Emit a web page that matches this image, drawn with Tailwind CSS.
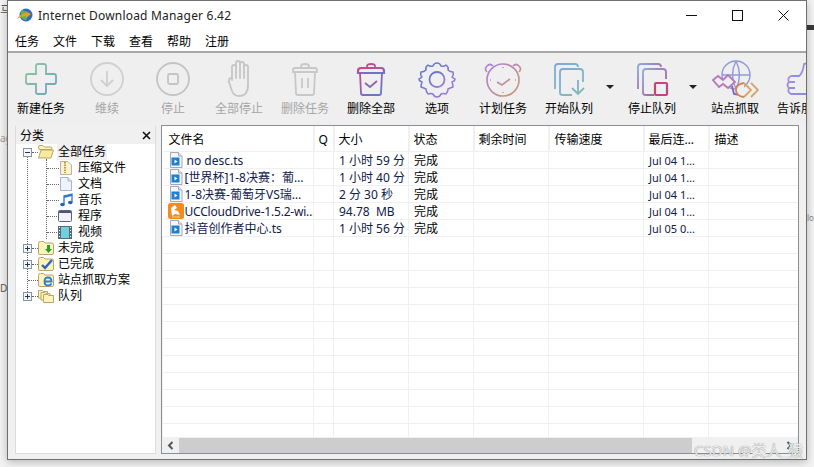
<!DOCTYPE html>
<html lang="zh">
<head>
  <meta charset="UTF-8">
  <title>Internet Download Manager 6.42</title>
  <script src="https://cdn.jsdelivr.net/npm/@tailwindcss/browser@4"></script>
</head>
<body class="w-[814px] h-[467px] overflow-hidden relative bg-[#f3f3f3] text-[12px] leading-[16px] text-black font-['Noto_Sans','Noto_Sans_CJK_SC',sans-serif]">

  <!-- shared gradients and file icon -->
  <svg width="0" height="0" class="absolute">
    <defs>
      <linearGradient id="gPlus" x1="0" y1="0" x2="1" y2="1"><stop offset="0" stop-color="#8fc9a0"/><stop offset="1" stop-color="#6f9fc0"/></linearGradient>
      <linearGradient id="gTrash" x1="0" y1="0" x2="0.6" y2="1"><stop offset="0" stop-color="#d9417f"/><stop offset="1" stop-color="#6a76c8"/></linearGradient>
      <linearGradient id="gGear" x1="0" y1="0" x2="1" y2="1"><stop offset="0" stop-color="#5a78c4"/><stop offset="1" stop-color="#a67ae0"/></linearGradient>
      <linearGradient id="gClock" x1="0" y1="0" x2="1" y2="1"><stop offset="0" stop-color="#a982e0"/><stop offset="1" stop-color="#d09a70"/></linearGradient>
      <linearGradient id="gStart" x1="0" y1="0" x2="1" y2="1"><stop offset="0" stop-color="#7ba8e4"/><stop offset="1" stop-color="#80c0a8"/></linearGradient>
      <linearGradient id="gStop" x1="0" y1="0" x2="1" y2="1"><stop offset="0" stop-color="#86aee4"/><stop offset="1" stop-color="#c2457f"/></linearGradient>
      <linearGradient id="gThumb" x1="0" y1="0" x2="1" y2="1"><stop offset="0" stop-color="#b08ae4"/><stop offset="1" stop-color="#8090e0"/></linearGradient>
      <symbol id="fileTs" viewBox="0 0 14 16">
        <path d="M1.5.5h8l3.5 3.5v11.500h-11.500z" fill="#f4f6fa" stroke="#a0aab8"/>
        <path d="M9.500.5v3.500h3.500" fill="#dfe5ee" stroke="#a0aab8"/>
        <rect x="2.500" y="5.500" width="8" height="8" fill="#1f80d0"/>
        <path d="M5.500 7.500l3 2-3 2z" fill="#fff"/>
      </symbol>
      <symbol id="plusBox" viewBox="0 0 9 9">
        <rect x=".5" y=".5" width="8" height="8" fill="#f6f6f6" stroke="#8a94a0"/>
        <path d="M2 4.500h5M4.500 2v5" stroke="#1c3a66"/>
      </symbol>
      <symbol id="folderY" viewBox="0 0 16 14">
        <path d="M.5 2.500q0-2 2-2h3l1.500 1.500h7q1.500 0 1.500 1.500v8.500q0 1.500-1.500 1.500h-12q-1.500 0-1.500-1.500z" fill="#fdf3bd" stroke="#b9a566"/>
      </symbol>
    </defs>
  </svg>

  <!-- bits of the windows behind -->
  <div class="absolute left-0 top-[3px] w-[7px] overflow-hidden text-[#555] whitespace-nowrap">马上</div>
  <div class="absolute left-0 top-[130px] w-[7px] overflow-hidden text-[10px] text-[#999]">age</div>
  <div class="absolute left-0 top-[280px] w-[7px] overflow-hidden text-[10px] text-[#555]">DI</div>
  <div class="absolute left-[807px] top-0 w-[7px] h-[467px] overflow-hidden">
    <div class="mt-[25px] h-[5px] bg-[#3a3a3a]"></div>
    <div class="mt-[180px] text-[8px] text-[#888]">lox</div>
  </div>

  <!-- window -->
  <div class="ml-[7px] w-[800px] h-[460px] border border-[#6f6f6f] bg-[#f0f0f0] flex flex-col shadow-[0_2px_8px_rgba(0,0,0,0.25)] relative overflow-hidden">

    <!-- title bar -->
    <div class="h-[29px] bg-white flex items-center shrink-0">
      <svg class="ml-[8px]" width="17" height="17" viewBox="0 0 17 17">
        <circle cx="10" cy="8" r="6.500" fill="#2f6fc0"/>
        <path d="M6 3q4 1 5 4t-1 6q-4 0-5-4t1-6z" fill="#6cb245"/>
        <path d="M1 12q3-5 9-6l-1-2 6 3-5 4 0-2q-5 0-9 3z" fill="#e6a020"/>
      </svg>
      <span class="ml-[5px] text-[#222] tracking-[0.2px]">Internet Download Manager 6.42</span>
      <div class="ml-auto flex items-center">
        <svg class="mr-[35px]" width="11" height="11" viewBox="0 0 11 11"><path d="M0 5.500h11" stroke="#111"/></svg>
        <svg class="mr-[35px]" width="11" height="11" viewBox="0 0 11 11"><rect x=".5" y=".5" width="10" height="10" fill="none" stroke="#111"/></svg>
        <svg class="mr-[17px]" width="11" height="11" viewBox="0 0 11 11"><path d="M.5.5l10 10M10.500.5l-10 10" stroke="#111"/></svg>
      </div>
    </div>

    <!-- menu bar -->
    <div class="h-[21px] pt-[3px] bg-white flex items-center gap-[14px] pl-[7px] shrink-0">
      <span>任务</span><span>文件</span><span>下载</span><span>查看</span><span>帮助</span><span>注册</span>
    </div>

    <!-- toolbar -->
    <div class="h-[74px] border-t-2 border-t-[#a8a8a8] bg-[#efefef] flex shrink-0 overflow-hidden">

      <div class="w-[66px] shrink-0 flex flex-col items-center pt-[6px]">
        <svg width="40" height="40" viewBox="0 0 40 40" fill="none" stroke="url(#gPlus)" stroke-width="1.800"><path d="M15 7q0-2 2-2h6q2 0 2 2v8h8q2 0 2 2v6q0 2-2 2h-8v8q0 2-2 2h-6q-2 0-2-2v-8H7q-2 0-2-2v-6q0-2 2-2h8z"/></svg>
        <span class="mt-[2px] whitespace-nowrap">新建任务</span>
      </div>

      <div class="w-[66px] shrink-0 flex flex-col items-center pt-[6px] text-[#a6a6a6]">
        <svg width="40" height="40" viewBox="0 0 40 40" fill="none" stroke="#cfcfcf" stroke-width="1.800"><circle cx="20" cy="20" r="16"/><path d="M20 12v15M14 21l6 6 6-6"/></svg>
        <span class="mt-[2px] whitespace-nowrap">维续</span>
      </div>

      <div class="w-[66px] shrink-0 flex flex-col items-center pt-[6px] text-[#a6a6a6]">
        <svg width="40" height="40" viewBox="0 0 40 40" fill="none" stroke="#c4c4c4" stroke-width="1.800"><circle cx="20" cy="20" r="16"/><rect x="15" y="15" width="10" height="10" rx="1.500"/></svg>
        <span class="mt-[2px] whitespace-nowrap">停止</span>
      </div>

      <div class="w-[66px] shrink-0 flex flex-col items-center pt-[6px] text-[#a6a6a6]">
        <svg width="40" height="40" viewBox="0 0 40 40" fill="none" stroke="#c6c6c6" stroke-width="1.800" stroke-linecap="round"><path d="M13 21V8q0-2 2-2t2 2v11M17 19V4q0-2 2-2t2 2v15M21 19V5q0-2 2-2t2 2v14M25 19V8q0-2 2-2t2 2v18q0 11-9 11-5 0-7-5l-3-9"/><path d="M10 23v-2q0-2 3-2"/></svg>
        <span class="mt-[2px] whitespace-nowrap">全部停止</span>
      </div>

      <div class="w-[66px] shrink-0 flex flex-col items-center pt-[6px] text-[#a6a6a6]">
        <svg width="40" height="40" viewBox="0 0 40 40" fill="none" stroke="#c8c8c8" stroke-width="1.800"><path d="M8 11q0-2 2-2h20q2 0 2 2v2H8z"/><path d="M16 9V7q0-2 4-2t4 2v2M10 13l1 21q0 2 2 2h14q2 0 2-2l1-21M17 19v10M23 19v10"/></svg>
        <span class="mt-[2px] whitespace-nowrap">删除任务</span>
      </div>

      <div class="w-[66px] shrink-0 flex flex-col items-center pt-[6px]">
        <svg width="40" height="40" viewBox="0 0 40 40" fill="none" stroke="url(#gTrash)" stroke-width="1.800"><path d="M7 12q0-3 3-3h20q3 0 3 3v2H7z" stroke-width="2.200"/><path d="M16 9V7q0-2 4-2t4 2v2M9 14l1 20q0 2 2 2h16q2 0 2-2l1-20"/><path d="M14 24l5 4 7-6"/></svg>
        <span class="mt-[2px] whitespace-nowrap">删除全部</span>
      </div>

      <div class="w-[66px] shrink-0 flex flex-col items-center pt-[6px]">
        <svg width="40" height="40" viewBox="0 0 40 40" fill="none" stroke="url(#gGear)" stroke-width="1.500"><path d="M20 4q3 0 4 3 3 1 5-1 3 2 2 5 2 2 5 2 1 3-1 5 1 1 3 2 0 2-3 3 1 3 1 5-3 1-5 2 0 3-2 5-3-1-5 0-1 3-4 3t-4-3q-2-1-5 0-2-2-2-5-2-1-5-2 0-2 1-5-3-1-3-3 2-1 3-2-2-2-1-5 3 0 5-2-1-3 2-5 2 2 5 1 1-3 4-3z" stroke-linejoin="round"/><circle cx="20" cy="20.500" r="7.500" stroke-width="1.800"/></svg>
        <span class="mt-[2px] whitespace-nowrap">选项</span>
      </div>

      <div class="w-[66px] shrink-0 flex flex-col items-center pt-[6px]">
        <svg width="40" height="40" viewBox="0 0 40 40" fill="none" stroke="url(#gClock)" stroke-width="1.700"><circle cx="20" cy="21" r="16"/><path d="M4 13q-3-3 0-6t6 0M36 13q3-3 0-6t-6 0"/><path d="M14 23l5 3 8-6"/><path d="M20 8v1M20 33v1M7 21h1M32 21h1" stroke-width="1.500"/></svg>
        <span class="mt-[2px] whitespace-nowrap">计划任务</span>
      </div>

      <div class="w-[83px] shrink-0 flex items-start">
        <div class="w-[66px] flex flex-col items-center pt-[6px]">
          <svg width="40" height="40" viewBox="0 0 40 40" fill="none" stroke="url(#gStart)" stroke-width="1.800"><path d="M6 30V8q0-3 3-3h17q3 0 3 3"/><path d="M11 34V13q0-3 3-3h17q3 0 3 3v10M23 36H14q-3 0-3-2"/><path d="M29 21v14M23 29l6 6 6-6"/></svg>
          <span class="mt-[2px] whitespace-nowrap">开始队列</span>
        </div>
        <div class="mt-[32px] ml-[4px] w-0 h-0 border-x-[4px] border-x-transparent border-t-[4px] border-t-[#222]"></div>
      </div>

      <div class="w-[83px] shrink-0 flex items-start">
        <div class="w-[66px] flex flex-col items-center pt-[6px]">
          <svg width="40" height="40" viewBox="0 0 40 40" fill="none" stroke="url(#gStop)" stroke-width="1.800"><path d="M6 30V8q0-3 3-3h17q3 0 3 3"/><path d="M11 34V13q0-3 3-3h17q3 0 3 3v7M22 36h-8q-3 0-3-2"/><rect x="23" y="24" width="12" height="12" rx="1" stroke-width="2.200" stroke="#c2457f"/></svg>
          <span class="mt-[2px] whitespace-nowrap">停止队列</span>
        </div>
        <div class="mt-[32px] ml-[4px] w-0 h-0 border-x-[4px] border-x-transparent border-t-[4px] border-t-[#222]"></div>
      </div>

      <div class="w-[66px] shrink-0 flex flex-col items-center pt-[6px]">
        <svg width="48" height="40" viewBox="0 0 48 40" fill="none" stroke-width="1.800" class="-mx-[4px]">
          <circle cx="25" cy="16" r="14" stroke="#8e9ad8" stroke-width="1.400"/>
          <path d="M11 16h28M25 2q-7 14 0 28M25 2q7 14 0 28" stroke="#8e9ad8" stroke-width="1.400"/>
          <path d="M2 21l5-4 5 4 5-5 7 7-7 6-5-4-4 3z" fill="#efefef" stroke="#b878b8"/>
          <path d="M21 27l2 8 6 1" stroke="#8060c0"/>
          <path d="M33 24q-8 1-8 7t8 7" fill="#efefef" stroke="#c8885a"/>
          <path d="M33 24l7 7-7 7M40 24l7 7-7 7" stroke="#d8a468"/>
        </svg>
        <span class="mt-[2px] whitespace-nowrap">站点抓取</span>
      </div>

      <div class="w-[66px] shrink-0 flex flex-col items-center pt-[6px]">
        <svg width="40" height="40" viewBox="0 0 40 40" fill="none" stroke="url(#gThumb)" stroke-width="1.800"><path d="M10 17h8q4-3 5-12 5-2 7 3v8"/><path d="M10 17q-4 2-2 6-3 3 0 6-2 4 2 6h24"/><path d="M8 23h6M8 29h6"/></svg>
        <span class="mt-[2px] whitespace-nowrap">告诉朋友</span>
      </div>
    </div>

    <!-- main -->
    <div class="flex-1 flex pl-[7px] pr-[7px] pt-0 pb-[5px] min-h-0">

      <!-- category panel -->
      <div class="w-[141px] border-x border-b border-[#dcdcdc] mt-[1px] flex flex-col">
        <div class="h-[18px] pt-[1px] flex items-center justify-between pl-[4px] pr-[4px] bg-[#f0f0f0] shrink-0">
          <span>分类</span>
          <svg width="9" height="9" viewBox="0 0 9 9"><path d="M1 1l7 7M8 1l-7 7" stroke="#111" stroke-width="1.600"/></svg>
        </div>
        <div class="flex-1 bg-white relative">
          <!-- tree connectors -->
          <div class="absolute left-[11px] top-[12px] h-[142px] border-l border-dotted border-[#666]"></div>
          <div class="absolute left-[30px] top-[15px] h-[80px] border-l border-dotted border-[#666]"></div>

          <div class="relative h-[16px] flex items-center pl-[7px]">
            <svg width="9" height="9" viewBox="0 0 9 9"><rect x=".5" y=".5" width="8" height="8" fill="#f6f6f6" stroke="#8a94a0"/><path d="M2 4.500h5" stroke="#1c3a66"/></svg>
            <span class="w-[6px] border-t border-dotted border-[#666]"></span>
            <svg width="16" height="14" viewBox="0 0 16 14"><path d="M.5 2q0-1.500 1.500-1.500h3l1.500 1.500h6q1.500 0 1.500 1.500v1h-13z" fill="#fdf3bd" stroke="#b9a566"/><path d="M.5 13l2.500-8h12.500l-2.500 8z" fill="#fbe9a0" stroke="#b9a566"/></svg>
            <span class="ml-[3px] px-[1px] bg-[#f0f0f0]">全部任务</span>
          </div>

          <div class="h-[16px] flex items-center pl-[31px]">
            <span class="w-[12px] border-t border-dotted border-[#666]"></span>
            <svg class="ml-[1px]" width="12" height="14" viewBox="0 0 12 14"><path d="M.5.5h7.500l3.500 3.500v9.500h-11z" fill="#fbf1d8" stroke="#b8b2a0"/><path d="M5 1v11" stroke="#d0962a" stroke-width="2" stroke-dasharray="1.500 1"/></svg>
            <span class="ml-[6px]">压缩文件</span>
          </div>
          <div class="h-[16px] flex items-center pl-[31px]">
            <span class="w-[12px] border-t border-dotted border-[#666]"></span>
            <svg class="ml-[1px]" width="12" height="14" viewBox="0 0 12 14"><path d="M.5.5h7.500l3.500 3.500v9.500h-11z" fill="#eef2fa" stroke="#aab4c8"/><path d="M8 .5v3.500h3.500" fill="#dde4f0" stroke="#aab4c8"/></svg>
            <span class="ml-[6px]">文档</span>
          </div>
          <div class="h-[16px] flex items-center pl-[31px]">
            <span class="w-[12px] border-t border-dotted border-[#666]"></span>
            <svg class="ml-[1px]" width="13" height="14" viewBox="0 0 13 14"><path d="M4 11V3l8-2v8" fill="none" stroke="#2f78c8" stroke-width="1.300"/><path d="M4 3l8-2v2l-8 2z" fill="#2f78c8"/><ellipse cx="2.500" cy="11.500" rx="2.300" ry="1.800" fill="#1f66b8"/><ellipse cx="10.300" cy="9.500" rx="2.300" ry="1.800" fill="#1f66b8"/></svg>
            <span class="ml-[5px]">音乐</span>
          </div>
          <div class="h-[16px] flex items-center pl-[31px]">
            <span class="w-[12px] border-t border-dotted border-[#666]"></span>
            <svg class="ml-[-1px]" width="14" height="12" viewBox="0 0 14 12"><rect x=".5" y=".5" width="13" height="11" rx="1" fill="#f2f2f8" stroke="#5a6488"/><rect x="1" y="1" width="12" height="2" fill="#4a5680"/></svg>
            <span class="ml-[6px]">程序</span>
          </div>
          <div class="h-[16px] flex items-center pl-[31px]">
            <span class="w-[12px] border-t border-dotted border-[#666]"></span>
            <svg class="ml-[-1px]" width="14" height="13" viewBox="0 0 14 13"><rect width="14" height="13" fill="#5a6a78"/><rect x="3" y="1" width="8" height="11" fill="#70d0dc"/><path d="M1 1.500h1M1 4.500h1M1 7.500h1M1 10.500h1M12 1.500h1M12 4.500h1M12 7.500h1M12 10.500h1" stroke="#fff"/></svg>
            <span class="ml-[6px]">视频</span>
          </div>

          <div class="relative h-[16px] flex items-center pl-[7px]">
            <svg width="9" height="9"><use href="#plusBox"/></svg>
            <span class="w-[6px] border-t border-dotted border-[#666]"></span>
            <svg width="16" height="14" viewBox="0 0 16 14"><use href="#folderY" width="16" height="14"/><path d="M9 4h3v4h2l-3.500 4L7 8h2z" fill="#2f9a2f"/></svg>
            <span class="ml-[4px]">未完成</span>
          </div>
          <div class="relative h-[16px] flex items-center pl-[7px]">
            <svg width="9" height="9"><use href="#plusBox"/></svg>
            <span class="w-[6px] border-t border-dotted border-[#666]"></span>
            <svg width="16" height="14" viewBox="0 0 16 14"><use href="#folderY" width="16" height="14"/><path d="M4 8l3 3 7-8" fill="none" stroke="#2a62c8" stroke-width="2.400"/></svg>
            <span class="ml-[4px]">已完成</span>
          </div>
          <div class="relative h-[16px] flex items-center pl-[12px]">
            <span class="w-[10px] border-t border-dotted border-[#666]"></span>
            <svg width="16" height="14" viewBox="0 0 16 14"><use href="#folderY" width="16" height="14"/><path d="M6.500 8.500h7q0-4-3.500-4t-3.500 4 3.500 4q2.500 0 3.500-2" fill="none" stroke="#2a7fd0" stroke-width="1.800"/></svg>
            <span class="ml-[4px]">站点抓取方案</span>
          </div>
          <div class="relative h-[16px] flex items-center pl-[7px]">
            <svg width="9" height="9"><use href="#plusBox"/></svg>
            <span class="w-[6px] border-t border-dotted border-[#666]"></span>
            <svg width="16" height="14" viewBox="0 0 16 14"><path d="M.5 9V1.500h4l1 1h4v7z" fill="#fdf3bd" stroke="#b9a566"/><path d="M3 11V3.500h4l1 1h4v7z" fill="#fdf3bd" stroke="#b9a566"/><path d="M5.500 13.500V5.500h4l1 1h5v7z" fill="#fdf3bd" stroke="#b9a566"/></svg>
            <span class="ml-[4px]">队列</span>
          </div>
        </div>
      </div>

      <!-- download list -->
      <div class="w-[638px] ml-[5px] border border-[#8a8f96] bg-white flex flex-col overflow-hidden">
        <div class="flex-1 min-h-0 overflow-hidden">
          <table class="table-fixed w-[638px] border-collapse">
            <colgroup>
              <col class="w-[151px]"><col class="w-[20px]"><col class="w-[75px]"><col class="w-[65px]"><col class="w-[75px]"><col class="w-[95px]"><col class="w-[65px]"><col class="w-[92px]">
            </colgroup>
            <thead>
              <tr class="h-[25px] text-left font-normal">
                <th class="font-normal pl-[6px] pt-[4px] border-r-2 border-[#f0f0f0]">文件名</th>
                <th class="font-normal pl-[4px] pt-[4px] border-r-2 border-[#f0f0f0]">Q</th>
                <th class="font-normal pl-[4px] pt-[4px] border-r-2 border-[#f0f0f0]">大小</th>
                <th class="font-normal pl-[4px] pt-[4px] border-r-2 border-[#f0f0f0]">状态</th>
                <th class="font-normal pl-[4px] pt-[4px] border-r-2 border-[#f0f0f0]">剩余时间</th>
                <th class="font-normal pl-[5px] pt-[4px] border-r-2 border-[#f0f0f0]">传输速度</th>
                <th class="font-normal pl-[4px] pt-[4px] border-r-2 border-[#f0f0f0]">最后连…</th>
                <th class="font-normal pl-[5px] pt-[4px]">描述</th>
              </tr>
            </thead>
            <tbody id="rows" class="text-[#10204a] leading-[14px]">
              <tr class="h-[17px]">
                <td class="pl-[6px] whitespace-nowrap overflow-hidden border border-[#f0f0f0] border-l-0"><div class="flex items-center h-[16px]"><svg width="14" height="16" class="shrink-0"><use href="#fileTs"/></svg><span class="ml-[4px] translate-y-px">no desc.ts</span></div></td>
                <td class="border border-[#f0f0f0]"></td>
                <td class="pl-[5px] pt-[2px] border border-[#f0f0f0]">1 小时 59 分</td>
                <td class="pl-[5px] pt-[2px] border border-[#f0f0f0] text-black">完成</td>
                <td class="border border-[#f0f0f0]"></td>
                <td class="border border-[#f0f0f0]"></td>
                <td class="pl-[5px] pt-[2px] border border-[#f0f0f0] whitespace-nowrap overflow-hidden text-[11px]">Jul 04 1…</td>
                <td class="border border-[#f0f0f0] border-r-0"></td>
              </tr>
              <tr class="h-[17px]">
                <td class="pl-[6px] whitespace-nowrap overflow-hidden border border-[#f0f0f0] border-l-0"><div class="flex items-center h-[16px]"><svg width="14" height="16" class="shrink-0"><use href="#fileTs"/></svg><span class="ml-[2px] translate-y-px">[世界杯]1-8决赛：葡…</span></div></td>
                <td class="border border-[#f0f0f0]"></td>
                <td class="pl-[5px] pt-[2px] border border-[#f0f0f0]">1 小时 40 分</td>
                <td class="pl-[5px] pt-[2px] border border-[#f0f0f0] text-black">完成</td>
                <td class="border border-[#f0f0f0]"></td>
                <td class="border border-[#f0f0f0]"></td>
                <td class="pl-[5px] pt-[2px] border border-[#f0f0f0] whitespace-nowrap overflow-hidden text-[11px]">Jul 04 1…</td>
                <td class="border border-[#f0f0f0] border-r-0"></td>
              </tr>
              <tr class="h-[17px]">
                <td class="pl-[6px] whitespace-nowrap overflow-hidden border border-[#f0f0f0] border-l-0"><div class="flex items-center h-[16px]"><svg width="14" height="16" class="shrink-0"><use href="#fileTs"/></svg><span class="ml-[2px] translate-y-px">1-8决赛-葡萄牙VS瑞…</span></div></td>
                <td class="border border-[#f0f0f0]"></td>
                <td class="pl-[5px] pt-[2px] border border-[#f0f0f0]">2 分 30 秒</td>
                <td class="pl-[5px] pt-[2px] border border-[#f0f0f0] text-black">完成</td>
                <td class="border border-[#f0f0f0]"></td>
                <td class="border border-[#f0f0f0]"></td>
                <td class="pl-[5px] pt-[2px] border border-[#f0f0f0] whitespace-nowrap overflow-hidden text-[11px]">Jul 04 1…</td>
                <td class="border border-[#f0f0f0] border-r-0"></td>
              </tr>
              <tr class="h-[17px]">
                <td class="pl-[5px] whitespace-nowrap overflow-hidden border border-[#f0f0f0] border-l-0"><div class="flex items-center h-[16px]"><svg width="16" height="16" viewBox="0 0 16 16" class="shrink-0"><rect width="16" height="16" rx="2.500" fill="#f58a1f"/><path d="M3 5l4-3 2 3-3 2 4 1 2 4-5-1-3 2z" fill="#fff"/><path d="M4 14h8" stroke="#ffd08a"/></svg><span class="ml-[1px] tracking-[-0.2px] translate-y-px">UCCloudDrive-1.5.2-wi…</span></div></td>
                <td class="border border-[#f0f0f0]"></td>
                <td class="pl-[5px] pt-[2px] border border-[#f0f0f0] whitespace-pre">94.78  MB</td>
                <td class="pl-[5px] pt-[2px] border border-[#f0f0f0] text-black">完成</td>
                <td class="border border-[#f0f0f0]"></td>
                <td class="border border-[#f0f0f0]"></td>
                <td class="pl-[5px] pt-[2px] border border-[#f0f0f0] whitespace-nowrap overflow-hidden text-[11px]">Jul 04 1…</td>
                <td class="border border-[#f0f0f0] border-r-0"></td>
              </tr>
              <tr class="h-[17px]">
                <td class="pl-[6px] whitespace-nowrap overflow-hidden border border-[#f0f0f0] border-l-0"><div class="flex items-center h-[16px]"><svg width="14" height="16" class="shrink-0"><use href="#fileTs"/></svg><span class="ml-[2px] translate-y-px">抖音创作者中心.ts</span></div></td>
                <td class="border border-[#f0f0f0]"></td>
                <td class="pl-[5px] pt-[2px] border border-[#f0f0f0]">1 小时 56 分</td>
                <td class="pl-[5px] pt-[2px] border border-[#f0f0f0] text-black">完成</td>
                <td class="border border-[#f0f0f0]"></td>
                <td class="border border-[#f0f0f0]"></td>
                <td class="pl-[5px] pt-[2px] border border-[#f0f0f0] whitespace-nowrap overflow-hidden text-[11px]">Jul 05 0…</td>
                <td class="border border-[#f0f0f0] border-r-0"></td>
              </tr>
            </tbody>
          </table>
        </div>
        <!-- scrollbar -->
        <div class="h-[16px] bg-[#f0f0f0] flex items-center shrink-0">
          <div class="w-[17px] flex justify-center"><svg width="7" height="9" viewBox="0 0 7 9"><path d="M5.500 1L2 4.500 5.500 8" fill="none" stroke="#555" stroke-width="2"/></svg></div>
          <div class="w-[513px] h-[15px] bg-[#cdcdcd]"></div>
          <div class="ml-auto w-[17px] flex justify-center"><svg width="7" height="9" viewBox="0 0 7 9"><path d="M1.500 1L5 4.500 1.500 8" fill="none" stroke="#555" stroke-width="2"/></svg></div>
        </div>
      </div>
    </div>
  </div>

  <!-- watermark -->
  <div class="absolute left-[694px] top-[441px] text-[15px] leading-[18px] text-[#ececec] whitespace-nowrap [text-shadow:0_0_1px_#666]">CSDN @类人_猿</div>

  <script>
    // empty rows down to the scrollbar
    const rows = document.getElementById('rows');
    for (let i = 0; i < 12; i++) {
      const tr = document.createElement('tr');
      tr.className = 'h-[17px]';
      for (let c = 0; c < 8; c++) {
        const td = document.createElement('td');
        td.className = 'border border-[#f0f0f0]';
        tr.appendChild(td);
      }
      rows.appendChild(tr);
    }
  </script>
</body>
</html>
